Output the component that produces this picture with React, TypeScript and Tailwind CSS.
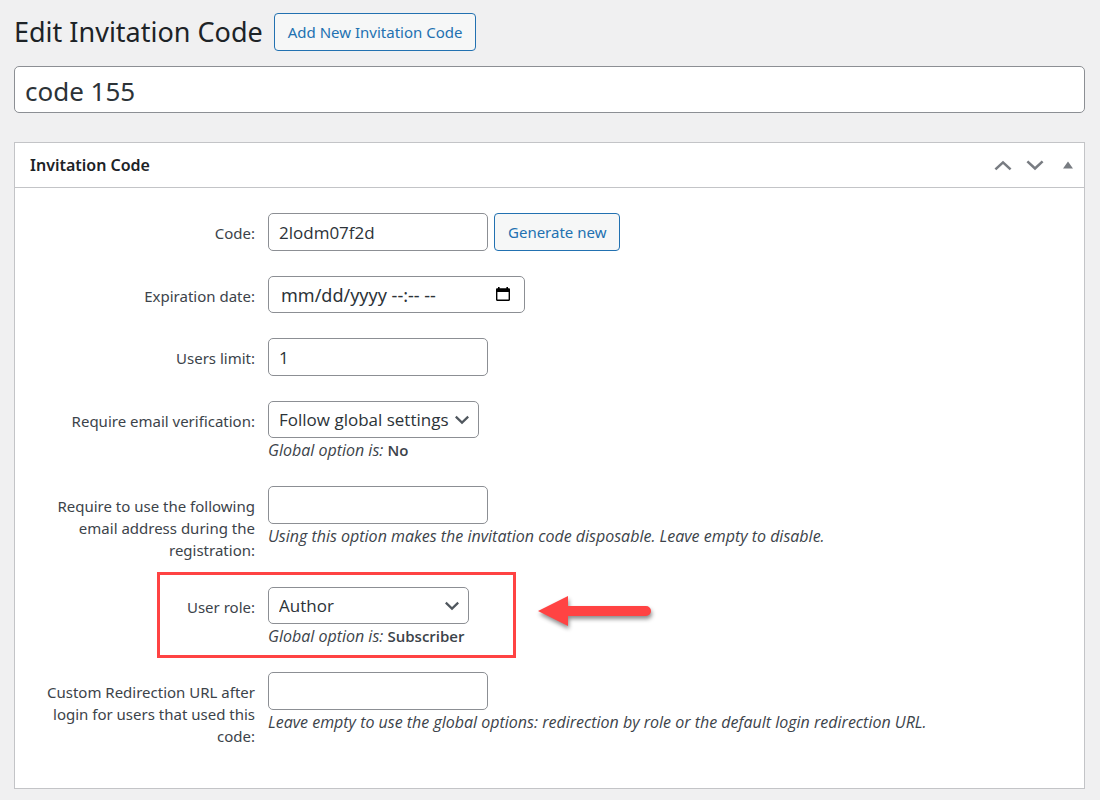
import type { ReactNode } from "react";

const box = "rounded-[5px] border border-[#8c8f94] bg-white text-[#2c3338] outline-none";
const field = `${box} px-[10px] font-['Open_Sans','Noto_Sans',sans-serif] text-[17px]`;
const button =
  "h-[38px] rounded-[4px] border border-[#2271b1] bg-[#f6f7f7] px-[13px] text-[15px] text-[#2271b1] whitespace-nowrap";

function Row({ id, label, children }: { id: string; label: string; children: ReactNode }) {
  return (
    <div className="relative flex items-start gap-[13px]">
      <label htmlFor={id} className="w-[215px] shrink-0 pt-[9px] pb-px text-right text-[15px] leading-[22px]">
        {label}
      </label>
      <div className="min-w-0 flex-1">{children}</div>
    </div>
  );
}

function Select({ id, wide, options }: { id: string; wide?: boolean; options: string[] }) {
  return (
    <div className={wide ? "relative w-[211px]" : "relative w-[201px]"}>
      <select id={id} className={`${field} block h-[37px] w-full appearance-none`}>
        {options.map((o) => (
          <option key={o}>{o}</option>
        ))}
      </select>
      <svg
        viewBox="0 0 16 10"
        className="pointer-events-none absolute top-[14px] right-[9px] h-[10px] w-4"
        fill="none"
        stroke="#50575e"
        strokeWidth="2.2"
      >
        <path d="M1.8 1.6 8 7.6l6.2-6" />
      </svg>
    </div>
  );
}

function Hint({ children }: { children: ReactNode }) {
  return (
    <p className="pt-px font-['Open_Sans','Noto_Sans',sans-serif] text-[16px] leading-[22px] italic">{children}</p>
  );
}

export default function App() {
  return (
    <div className="min-h-screen bg-[#f0f0f1] px-[14px] pt-[13px] pr-[15px] pb-[11px] font-['Noto_Sans','Open_Sans',sans-serif] text-[#3c434a]">
      <header className="flex items-center gap-[11px]">
        <h1 className="text-[27px] leading-[38px] text-[#1d2327]">Edit Invitation Code</h1>
        <button type="button" className={button}>Add New Invitation Code</button>
      </header>
      <input
        aria-label="Title"
        defaultValue="code 155"
        className={`${box} mt-[15px] block h-[47px] w-full px-[10px] pt-[2px] text-[26px]`}
      />
      <section className="mt-[29px] border border-[#c3c4c7] bg-white">
        <div className="flex h-[45px] items-center justify-between border-b border-[#c3c4c7] px-[11px] pl-[15px]">
          <h2 className="text-[16px] font-semibold text-[#1d2327]">Invitation Code</h2>
          <div className="flex items-center gap-[14px] text-[#787c82]">
            <button type="button" aria-label="Move up">
              <svg viewBox="0 0 18 12" className="h-3 w-[18px]" fill="none" stroke="currentColor" strokeWidth="2.6">
                <path d="M1.400 10.400 9 3.400l7.600 7" />
              </svg>
            </button>
            <button type="button" aria-label="Move down">
              <svg viewBox="0 0 18 12" className="h-3 w-[18px]" fill="none" stroke="currentColor" strokeWidth="2.6">
                <path d="M1.400 2.400 9 9.400l7.600-7" />
              </svg>
            </button>
            <button type="button" aria-label="Toggle panel" className="pl-[5px]">
              <svg viewBox="0 0 10 8" className="h-2 w-[10px]" fill="currentColor">
                <path d="M0 7.500 5 .5l5 7z" />
              </svg>
            </button>
          </div>
        </div>
        <form className="flex flex-col gap-[25px] px-[25px] pt-[25px] pb-10">
          <Row id="code" label="Code:">
            <div className="flex gap-[6px]">
              <input id="code" defaultValue="2lodm07f2d" className={`${field} h-[38px] w-[220px]`} />
              <button type="button" className={button}>Generate new</button>
            </div>
          </Row>
          <Row id="expiration" label="Expiration date:">
            <div className="relative w-[257px]">
              <input
                id="expiration"
                placeholder="mm/dd/yyyy --:-- --"
                className={`${box} block h-[37px] w-full px-3 text-[18px] placeholder:text-[#2c3338]`}
              />
              <button type="button" aria-label="Pick a date" className="absolute top-[10px] right-[15px]">
                <svg viewBox="0 0 14 16" className="h-4 w-[14px]" fill="#000">
                  <path
                    fillRule="evenodd"
                    d="M2 1h1.6v1.2h6.8V1H12v1.2h.8c.7 0 1.2.5 1.2 1.2v10.4c0 .7-.5 1.2-1.2 1.2H1.2C.5 15 0 14.5 0 13.800V3.4c0-.7.5-1.200 1.200-1.200H2zM1.400 6v7.600h11.200V6z"
                  />
                </svg>
              </button>
            </div>
          </Row>
          <Row id="limit" label="Users limit:">
            <input id="limit" defaultValue="1" className={`${field} block h-[38px] w-[220px]`} />
          </Row>
          <Row id="verification" label="Require email verification:">
            <Select id="verification" wide options={["Follow global settings", "Yes", "No"]} />
            <Hint>
              Global option is: <b className="text-[15px] font-semibold not-italic">No</b>
            </Hint>
          </Row>
          <Row id="email" label="Require to use the following email address during the registration:">
            <input id="email" type="email" className={`${field} block h-[38px] w-[220px]`} />
            <Hint>Using this option makes the invitation code disposable. Leave empty to disable.</Hint>
          </Row>
          <Row id="role" label="User role:">
            <Select id="role" options={["Author", "Editor", "Subscriber"]} />
            <Hint>
              Global option is: <b className="text-[15px] font-semibold not-italic">Subscriber</b>
            </Hint>
            <div className="pointer-events-none absolute -top-[15px] left-[117px] h-[86px] w-[359px] border-[3px] border-[#ff4343]" />
            <svg
              viewBox="0 0 124 44"
              className="pointer-events-none absolute top-1 left-[494px] h-11 w-[124px] drop-shadow-[1px_3px_2px_rgba(0,0,0,0.45)]"
              fill="#ff4343"
            >
              <path d="M4 20 34 5v10h78a5 5 0 0 1 0 10H34v10z" />
            </svg>
          </Row>
          <Row id="redirect" label="Custom Redirection URL after login for users that used this code:">
            <input id="redirect" type="url" className={`${field} block h-[38px] w-[220px]`} />
            <Hint>
              Leave empty to use the global options: redirection by role or the default login redirection URL.
            </Hint>
          </Row>
        </form>
      </section>
    </div>
  );
}
